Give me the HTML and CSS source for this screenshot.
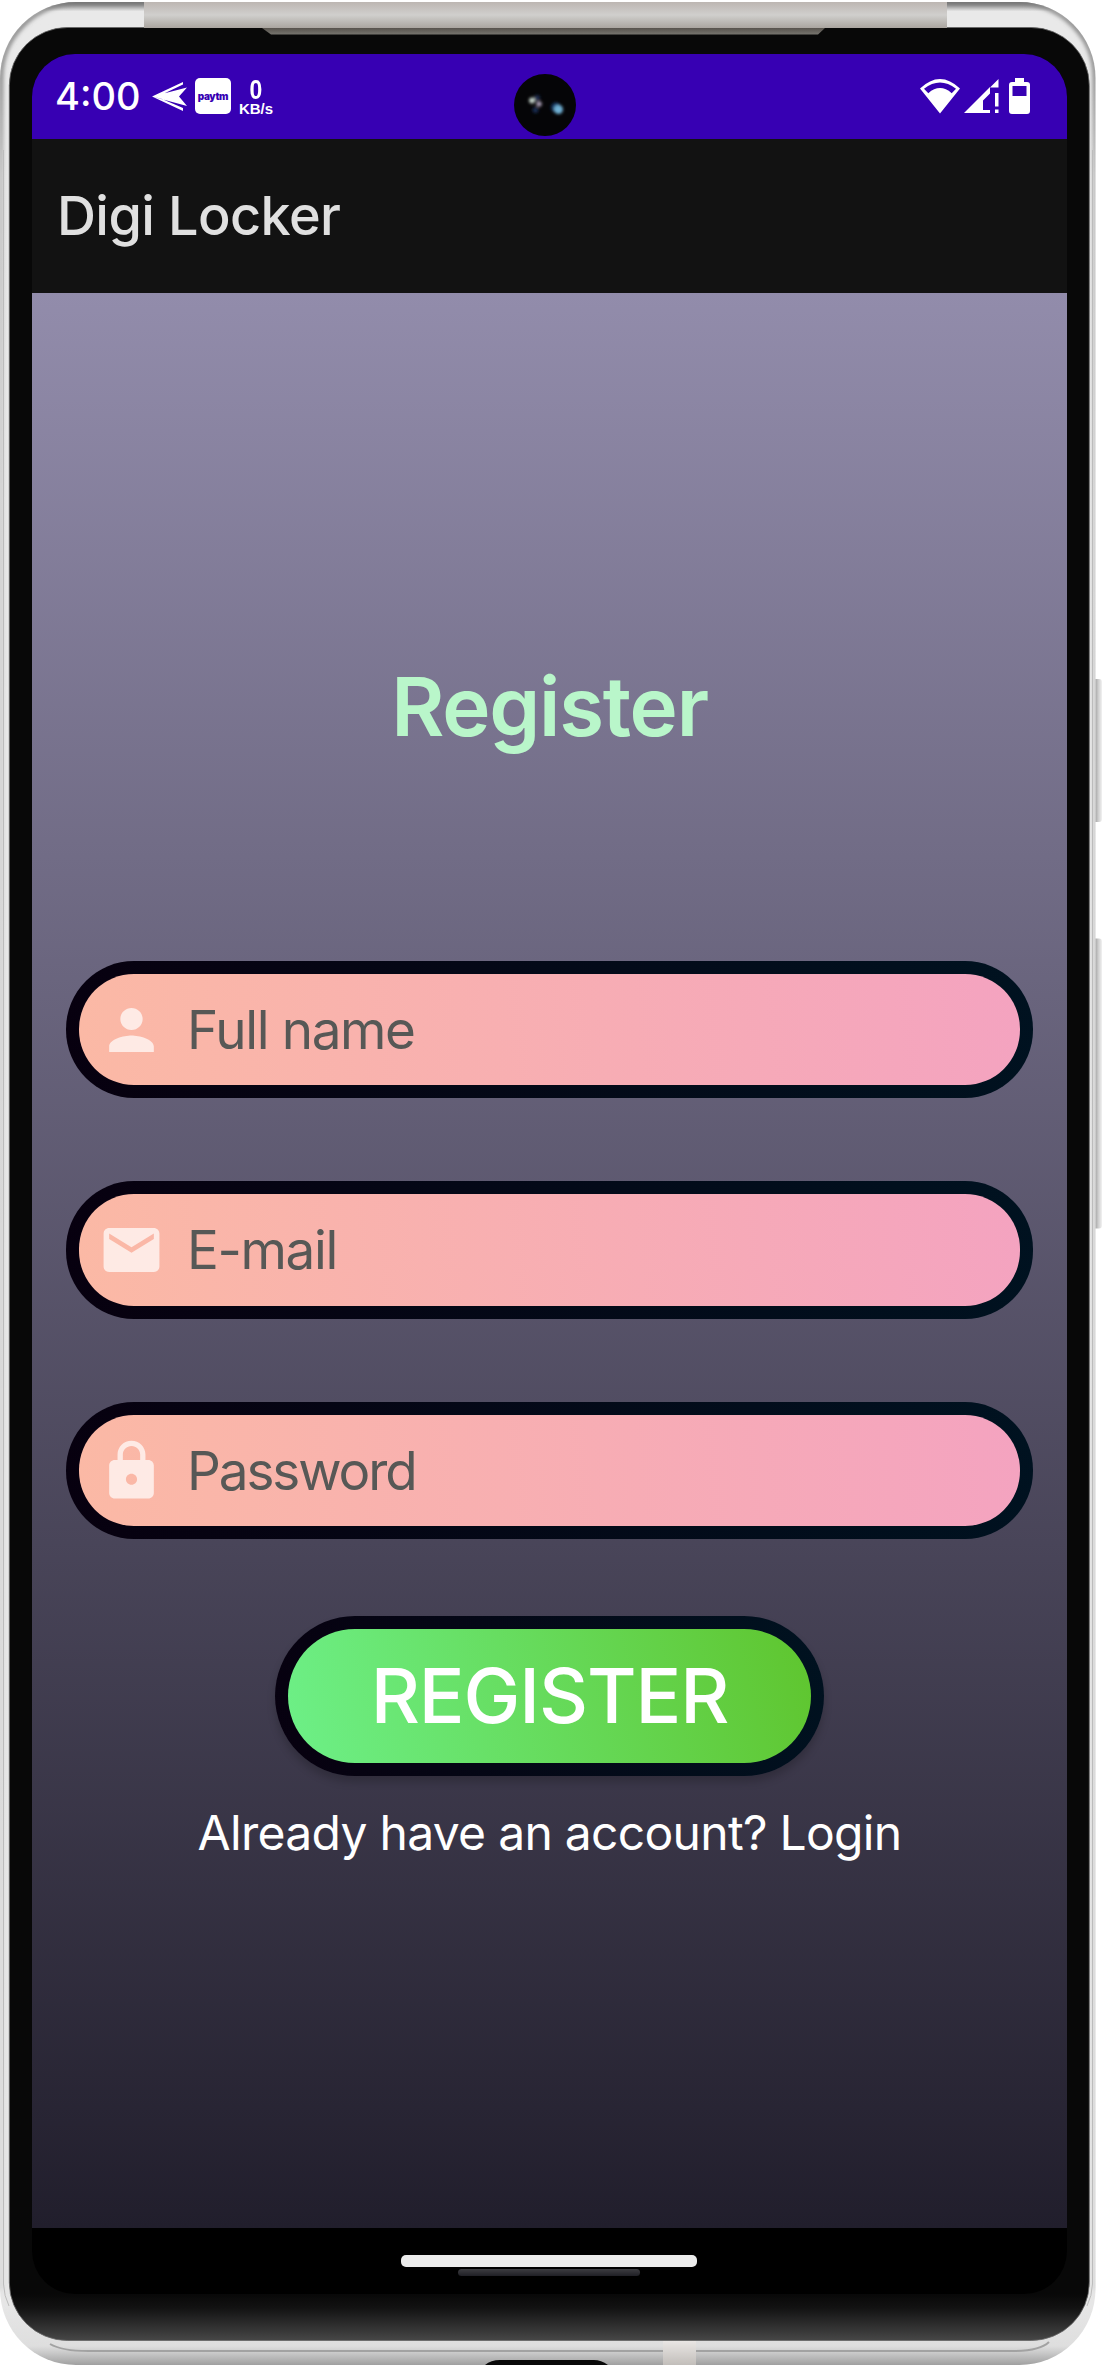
FILE: index.html
```html
<!DOCTYPE html>
<html lang="en">
<head>
<meta charset="utf-8">
<title>Digi Locker</title>
<link rel="stylesheet" href="styles.css">
</head>
<body>
<div class="phone">
  <svg class="shell" width="1103" height="2365" viewBox="0 0 1103 2365">
    <defs>
      <linearGradient id="key" x1="0" x2="1" y1="0" y2="0"><stop offset="0" stop-color="#a2a2a2"/><stop offset=".5" stop-color="#cfcfcf"/><stop offset="1" stop-color="#f2f2f2"/></linearGradient>
      <linearGradient id="rail" gradientUnits="userSpaceOnUse" x1="0" x2="0" y1="2" y2="2365"><stop offset="0" stop-color="#777"/><stop offset=".004" stop-color="#e9e9e9"/><stop offset=".975" stop-color="#e6e6e6"/><stop offset=".992" stop-color="#dedede"/><stop offset=".995" stop-color="#c8c8c8"/><stop offset="1" stop-color="#a0a0a0"/></linearGradient>
      <linearGradient id="side" gradientUnits="userSpaceOnUse" x1="0" x2="0" y1="65" y2="2300"><stop offset="0" stop-color="#777"/><stop offset=".05" stop-color="#b5b5b5"/><stop offset=".2" stop-color="#c8c8c8"/><stop offset="1" stop-color="#d8d8d8"/></linearGradient>
      <linearGradient id="antenna" x1="0" x2="0" y1="0" y2="1"><stop offset="0" stop-color="#bdb6b2"/><stop offset=".5" stop-color="#d0cfcd"/><stop offset="1" stop-color="#aaa59f"/></linearGradient>
      <linearGradient id="antenna-low" x1="0" x2="0" y1="0" y2="1"><stop offset="0" stop-color="#ebe8e6"/><stop offset="1" stop-color="#c2beba"/></linearGradient>
      <linearGradient id="ear" x1="0" x2="0" y1="0" y2="1"><stop offset="0" stop-color="#57524c"/><stop offset="1" stop-color="#77756f"/></linearGradient>
      <linearGradient id="bezel" gradientUnits="userSpaceOnUse" x1="0" x2="0" y1="2294" y2="2340"><stop offset="0" stop-color="#080808"/><stop offset=".3" stop-color="#121212"/><stop offset="1" stop-color="#464646"/></linearGradient>
      <filter id="soft"><feGaussianBlur stdDeviation="2"/></filter>
      <clipPath id="body"><rect x="0" y="2" width="1095.5" height="2363" rx="76" ry="76"/></clipPath>
    </defs>
    <path fill="url(#key)" d="M1095 679h4q3 0 3 3v137q0 3-3 3h-4zM1095 938.500h4q3 0 3 3v284q0 3-3 3h-4z"/>
    <g clip-path="url(#body)">
      <rect y="2" width="1096" height="2364" fill="url(#rail)"/>
      <path d="M1 2290V78A75 75 0 0 1 76 3H1020A75 75 0 0 1 1095 78V2290" fill="none" stroke="url(#side)" stroke-width="4" filter="url(#soft)"/>
      <path d="M3.500 150V2284Q4 2296 9 2306M1092.500 150V2284Q1092 2296 1087 2306" fill="none" stroke="#bcbcbc" stroke-width="1"/>
      <path d="M50 2344Q62 2351 88 2351H1012Q1040 2351 1049 2342" fill="none" stroke="#a2a2a2" stroke-width="2"/>
      <rect x="663" y="2340" width="33" height="25" fill="url(#antenna-low)"/>
      <path d="M485 2365Q491 2360 500 2360H594Q601 2360 608 2365z" fill="#080808"/>
    </g>
    <rect x="9.300" y="27.500" width="1080" height="2313" rx="58" fill="url(#bezel)" stroke="#666" stroke-width=".8"/>
    <rect x="144" y="2" width="803" height="26" fill="url(#antenna)"/>
    <path d="M262 28H825L818 34.500H271z" fill="url(#ear)"/>
  </svg>

  <div class="screen">
    <header class="status">
      <span class="clock">4:00</span>
      <svg class="plane" width="35" height="29" viewBox="0 0 35 29" fill="#fff"><path d="M0 14.500 31 0 31 2.500 10 12.500zM0 14.500 35 5.500 27 14.500 35 24 0 14.500zM0 14.500 31 29 31 26 10 17z"/></svg>
      <span class="paytm"><span>paytm</span></span>
      <span class="speed"><b>0</b><small>KB/s</small></span>
      <svg class="wifi" width="40" height="35" viewBox="0 0 40 35"><path fill="#fff" fill-rule="evenodd" d="M0 9.500Q20-9.500 40 9.500L20 34.500zM4 9.800 8.300 14.200Q20 4 31.700 14.200L36 9.800Q20-3 4 9.800z"/></svg>
      <svg class="signal" width="35" height="35" viewBox="0 0 35 35" fill="#fff"><path d="M0 34 26 8V14.500L19 21.500V31H26V34zM34.500 0V8.500H26zM31 14h3.500v13.500H31zM31 30.500h3.500V34H31z"/></svg>
      <svg class="battery" width="21" height="36" viewBox="0 0 21 36"><path fill="#fff" fill-rule="evenodd" d="M6 0h9v4h3q3 0 3 3v26q0 3-3 3H3q-3 0-3-3V7q0-3 3-3h3zM3.500 8v10h14V8z"/></svg>
    </header>
    <div class="appbar"><span class="app-name">Digi Locker</span></div>
    <main class="content">
      <h1 class="title"><span>Register</span></h1>
      <form class="form">
        <label class="field">
          <svg class="icon" viewBox="0 0 24 24" preserveAspectRatio="none"><path d="M12 12c2.210 0 4-1.790 4-4s-1.790-4-4-4-4 1.790-4 4 1.790 4 4 4zm0 2c-2.670 0-8 1.340-8 4v2h16v-2c0-2.660-5.330-4-8-4z"/></svg>
          <span class="hint">Full name</span>
        </label>
        <label class="field">
          <svg class="icon" viewBox="0 0 24 24" preserveAspectRatio="none"><path d="M20 4H4c-1.100 0-1.990.9-1.990 2L2 18c0 1.100.9 2 2 2h16c1.100 0 2-.9 2-2V6c0-1.100-.9-2-2-2zm0 4l-8 5-8-5V6l8 5 8-5v2z"/></svg>
          <span class="hint">E-mail</span>
        </label>
        <label class="field">
          <svg class="icon" viewBox="0 0 24 24" preserveAspectRatio="none"><path d="M18 8h-1V6c0-2.760-2.240-5-5-5S7 3.240 7 6v2H6c-1.100 0-2 .9-2 2v10c0 1.100.9 2 2 2h12c1.100 0 2-.9 2-2V10c0-1.100-.9-2-2-2zm-6 9c-1.100 0-2-.9-2-2s.9-2 2-2 2 .9 2 2-.9 2-2 2zm3.100-9H8.900V6c0-1.710 1.390-3.100 3.100-3.100 1.710 0 3.100 1.390 3.100 3.100v2z"/></svg>
          <span class="hint hint-pass">Password</span>
        </label>
        <button class="submit" type="button"><span>REGISTER</span></button>
      </form>
      <p class="login"><span>Already have an account? Login</span></p>
    </main>
    <footer class="nav"><div class="pill"></div><div class="port"></div></footer>
  </div>

  <svg class="camera" width="62" height="62" viewBox="0 0 62 62">
    <defs><filter id="glow" x="-1" y="-1" width="3" height="3"><feGaussianBlur stdDeviation="1.500"/></filter></defs>
    <circle cx="31" cy="31" r="31" fill="#050507"/>
    <g filter="url(#glow)">
      <circle cx="23" cy="24" r="3" fill="#1c2c50"/><circle cx="21.500" cy="36" r="3" fill="#182a50"/>
      <circle cx="18" cy="26.500" r="3" fill="#c2d0c8"/><circle cx="25" cy="30" r="2.800" fill="#a599b0"/>
      <circle cx="42" cy="33.500" r="5" fill="#173a66"/><circle cx="44.500" cy="35.500" r="4.500" fill="#6fb0d4"/>
    </g>
  </svg>
</div>
</body>
</html>
```
FILE: styles.css
```css
* { box-sizing: border-box; }
body {
  margin: 0;
  background: #fff;
  font-family: Inter, "Open Sans", sans-serif;
}
.phone {
  position: relative;
  width: 1103px;
  height: 2365px;
  padding: 53.7px 36.5px 0 32px;
  overflow: hidden;
}
.shell { position: absolute; left: 0; top: 0; }
.camera { position: absolute; left: 514px; top: 74px; }

.screen {
  position: relative;
  height: 2240.300px;
  display: flex;
  flex-direction: column;
  border-radius: 43px;
  overflow: hidden;
  background: #000;
}
.screen span { white-space: nowrap; }

.status {
  height: 85.500px;
  flex: none;
  display: flex;
  align-items: center;
  padding: 0 36.500px 0 23px;
  background: #3700b3;
  color: #fff;
}
.clock {
  width: 85px;
  font-size: 38px;
  font-weight: 500;
  line-height: 40px;
}
.plane { margin-left: 12px; }
.paytm {
  width: 36px;
  height: 36px;
  margin-left: 8px;
  display: flex;
  align-items: center;
  justify-content: center;
  border-radius: 5px;
  background: #fff;
  color: #3700b3;
  font-size: 10px;
  font-weight: 900;
  letter-spacing: -.4px;
}
.speed {
  width: 36px;
  margin-left: 7px;
  display: flex;
  flex-direction: column;
  align-items: center;
}
.speed b { font: 700 28px/24px "Liberation Sans", sans-serif; transform: scaleX(.82); }
.speed small { font: 700 15px/13px "Liberation Sans", sans-serif; }
.wifi { margin-left: auto; }
.signal { margin-left: 4px; }
.battery { margin-left: 10px; }

.appbar {
  height: 153.800px;
  flex: none;
  display: flex;
  align-items: center;
  padding: 0 25px 1px;
  background: #121212;
  color: #e0e0e0;
}
.app-name { font-size: 54px; font-weight: 500; letter-spacing: -.6px; }

.content {
  flex: 1;
  display: flex;
  flex-direction: column;
  align-items: center;
  padding: 364px 33.500px 0 34px;
  background: linear-gradient(#928cab, #211e2c);
}
.title {
  margin: 0;
  font-size: 81.600px;
  font-weight: 600;
  line-height: 100px;
  letter-spacing: -1.200px;
  color: #b9f6ca;
}
.form {
  width: 100%;
  margin-top: 204px;
  display: flex;
  flex-direction: column;
  align-items: center;
  gap: 83.200px;
}
.field {
  width: 100%;
  height: 137.300px;
  display: flex;
  align-items: center;
  gap: 22px;
  padding-left: 19px;
  border: 13px solid transparent;
  border-radius: 68px;
  background:
    linear-gradient(84deg, #fbb9a5, #f4a3c0) padding-box,
    linear-gradient(84deg, #07000f, #001220) border-box;
}
.icon { width: 67px; height: 66px; flex: none; fill: rgba(255, 255, 255, .7); }
.hint { font-size: 53px; letter-spacing: -1.350px; color: #575856; }
.hint-pass { letter-spacing: -2.100px; }
.submit {
  width: 548.700px;
  height: 159.500px;
  margin: -6px 0 0;
  padding: 0 0 3px;
  border: 13px solid transparent;
  border-radius: 80px;
  background:
    linear-gradient(75deg, #6df088, #5fc52e) padding-box,
    linear-gradient(75deg, #07000f, #001220) border-box;
  box-shadow: 0 6px 9px rgba(0, 0, 0, .2);
  color: #fff;
  font-family: inherit;
  font-size: 76px;
  font-weight: 500;
  letter-spacing: -1.100px;
}
.title span, .submit span, .login span, .hint, .app-name, .clock { display: block; }
.login {
  margin: 22px 0 0;
  font-size: 48px;
  line-height: 70px;
  letter-spacing: -.700px;
  color: #fff;
}

.nav {
  height: 66px;
  flex: none;
  display: flex;
  flex-direction: column;
  align-items: center;
  padding-top: 27.500px;
}
.pill {
  width: 296px;
  height: 12px;
  border-radius: 5px;
  background: #ececec;
}
.port {
  width: 182px;
  height: 7px;
  margin-top: 1.500px;
  border-radius: 4px;
  background: linear-gradient(#3c3c40, #202026);
}
```
